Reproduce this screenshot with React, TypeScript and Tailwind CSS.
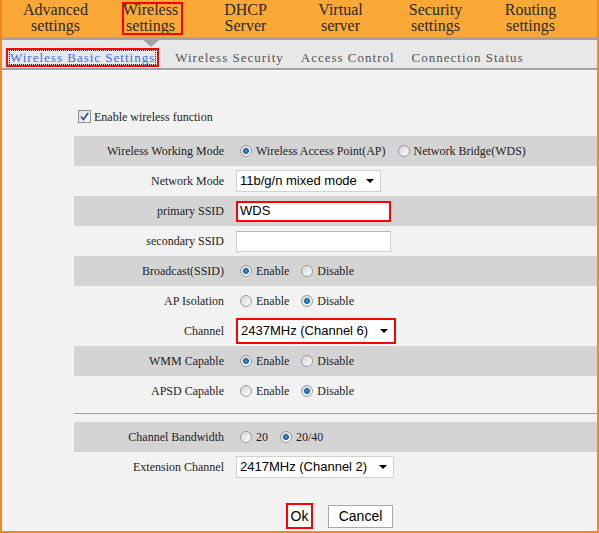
import React from 'react';

const NAV = [
  ['Advanced', 'settings'],
  ['Wireless', 'settings'],
  ['DHCP', 'Server'],
  ['Virtual', 'server'],
  ['Security', 'settings'],
  ['Routing', 'settings'],
];

const TABS = ['Wireless Basic Settings', 'Wireless Security', 'Access Control', 'Connection Status'];

const Radio = ({ checked }: { checked?: boolean }) => (
  <span className="flex size-[12px] shrink-0 items-center justify-center rounded-full border border-[#9a9a9a] bg-linear-to-br from-[#d6d6d6] to-[#fdfdfd]">
    {checked && <span className="size-[6px] rounded-full border border-[#0f4f8f] bg-[#2f86d8]" />}
  </span>
);

const Opt = ({ checked, label, first }: { checked?: boolean; label: string; first?: boolean }) => (
  <div className={`flex items-center ${first ? 'ml-[4px]' : 'ml-[12px]'}`}>
    <Radio checked={checked} />
    <span className="ml-[4px]">{label}</span>
  </div>
);

const Select = ({ value, w, red }: { value: string; w: string; red?: boolean }) => (
  <div
    className={`flex items-center justify-between bg-white pl-[3px] pr-[6px] font-['Liberation_Sans',Arial,sans-serif] text-[13px] text-black ${w} ${
      red ? 'h-[26px] border-2 border-[#ff0000]' : 'h-[22px] border border-[#d0d0d0]'
    }`}
  >
    <span>{value}</span>
    <span className="h-0 w-0 border-x-[4px] border-t-[4px] border-x-transparent border-t-black" />
  </div>
);

const Row = ({ label, shade, children }: { label: string; shade?: boolean; children?: React.ReactNode }) => (
  <div className={`flex h-[30px] items-center ${shade ? 'bg-[#d4d4d4]' : ''}`}>
    <div className="w-[150px] text-right">{label}</div>
    <div className="ml-[12px] flex items-center">{children}</div>
  </div>
);

export default function App() {
  return (
    <div className="h-[533px] w-[599px] overflow-hidden border-x-2 border-b-2 border-[#f5871f] bg-[#f2f2f2] font-['Liberation_Serif',serif] text-[12px] text-[#1e1e1e]">
      {/* top menu */}
      <div className="flex h-[37px] bg-[#faa936] pl-[6px] text-[16px] leading-[16px] text-[#2a2a2a]">
        {NAV.map(([a, b], i) => (
          <div key={i} className="relative w-[95px] pt-[2px] text-center">
            <div>{a}</div>
            <div>{b}</div>
            {i === 1 && <div className="absolute left-[19px] top-[2px] h-[33px] w-[61px] border-2 border-[#ff0000]" />}
          </div>
        ))}
      </div>
      <div className="h-[3px] bg-[#a2a2a2]" />

      {/* sub tabs */}
      <div className="relative flex h-[28px] items-end bg-[#e8e8e8] pb-[1px] pl-[4px] text-[13px] leading-[13px] tracking-[1px]">
        <span className="absolute left-[141px] top-0 h-0 w-0 border-x-[8px] border-t-[7px] border-x-transparent border-t-[#a2a2a2]" />
        {TABS.map((t, i) => (
          <div
            key={t}
            className={`border-2 px-[1px] ${i === 0 ? 'border-[#ff0000]' : 'border-transparent'} ${i === 1 ? 'ml-[12px]' : i > 1 ? 'ml-[9px]' : ''}`}
          >
            <div className={`border border-dotted ${i === 0 ? 'border-[#222]' : 'border-transparent'}`}>
              <span className={i === 0 ? 'text-[#3d6df2]' : 'text-[#555]'}>{t}</span>
            </div>
          </div>
        ))}
      </div>
      <div className="h-[2px] bg-[#a2a2a2]" />
      <div className="h-[1px] bg-[#fafafa]" />

      {/* form */}
      <div className="flex flex-col pl-[72px]">
        <div className="ml-[4px] mt-[39px] flex h-[13px] items-center">
          <span className="flex size-[13px] items-center justify-center border border-[#8f8f8f] bg-linear-to-br from-[#dcdcdc] to-[#fafafa]">
            <svg width="9" height="9" viewBox="0 0 9 9">
              <path d="M1 4.5 L3.5 7.5 L8 1" fill="none" stroke="#3a4fb0" strokeWidth="1.8" />
            </svg>
          </span>
          <span className="ml-[3px]">Enable wireless function</span>
        </div>

        <div className="mt-[13px]">
          <Row label="Wireless Working Mode" shade>
            <Opt first checked label="Wireless Access Point(AP)" />
            <Opt label="Network Bridge(WDS)" />
          </Row>
          <Row label="Network Mode">
            <Select value="11b/g/n mixed mode" w="w-[145px]" />
          </Row>
          <Row label="primary SSID" shade>
            <div className="flex h-[21px] w-[155px] items-center border-2 border-[#ff0000] bg-white pl-[2px] font-['Liberation_Sans',Arial,sans-serif] text-[13px] text-black">
              WDS
            </div>
          </Row>
          <Row label="secondary SSID">
            <div className="h-[21px] w-[155px] border border-[#cfcfcf] border-t-[#b5b5b5] bg-white" />
          </Row>
          <Row label="Broadcast(SSID)" shade>
            <Opt first checked label="Enable" />
            <Opt label="Disable" />
          </Row>
          <Row label="AP Isolation">
            <Opt first label="Enable" />
            <Opt checked label="Disable" />
          </Row>
          <Row label="Channel">
            <Select value="2437MHz (Channel 6)" w="w-[160px]" red />
          </Row>
          <Row label="WMM Capable" shade>
            <Opt first checked label="Enable" />
            <Opt label="Disable" />
          </Row>
          <Row label="APSD Capable">
            <Opt first label="Enable" />
            <Opt checked label="Disable" />
          </Row>
        </div>

        <div className="mt-[7px] h-[1px] bg-[#a0a0a0]" />

        <div className="mt-[8px]">
          <Row label="Channel Bandwidth" shade>
            <Opt first label="20" />
            <Opt checked label="20/40" />
          </Row>
          <Row label="Extension Channel">
            <Select value="2417MHz (Channel 2)" w="w-[158px]" />
          </Row>
        </div>

        <div className="ml-[212px] mt-[21px] flex items-center font-['Liberation_Sans',Arial,sans-serif] text-[14px] text-black">
          <button className="h-[26px] w-[27px] border-2 border-[#ff0000] bg-white">Ok</button>
          <button className="ml-[15px] h-[23px] w-[65px] border border-[#a8a8a8] bg-white">Cancel</button>
        </div>
      </div>
    </div>
  );
}
